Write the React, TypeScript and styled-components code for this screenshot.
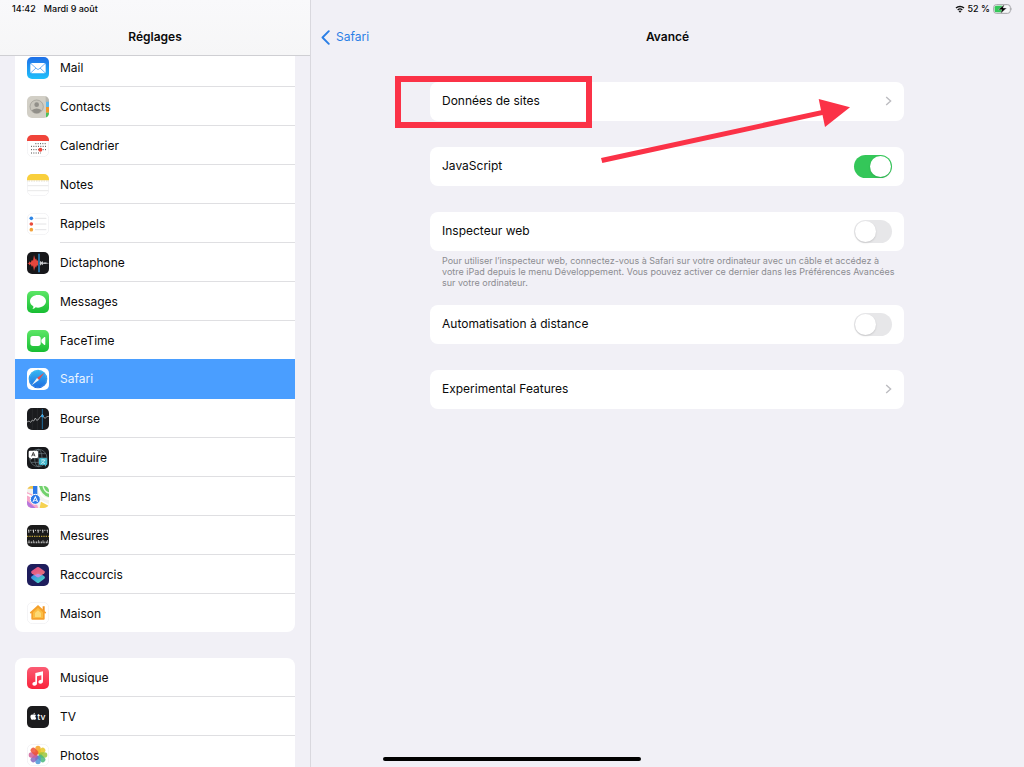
import React, { useState } from "react";
import styled, { createGlobalStyle, css } from "styled-components";
import { FaApple } from "react-icons/fa";

const colors = {
  page: "#f1f0f6",
  card: "#ffffff",
  line: "#dfdfe2",
  selected: "#4a9eff",
  link: "#2b7fe6",
  muted: "#8c8c91",
  mark: "#fb3247",
};

const GlobalStyle = createGlobalStyle`
  *, *::before, *::after { box-sizing: border-box; }
  body {
    margin: 0;
    background: ${colors.page};
    color: #0a0a0a;
    font-family: Inter, "Liberation Sans", sans-serif;
    font-size: 12px;
    line-height: 16px;
  }
  h1, h2, p, ul { margin: 0; padding: 0; }
`;

const Screen = styled.div`
  position: relative;
  display: flex;
  height: 100vh;
  overflow: hidden;
`;

const Sidebar = styled.nav`
  position: relative;
  flex: 0 0 311px;
  border-right: 1px solid #d9d8de;
  overflow: hidden;
`;

const SidebarHeader = styled.header`
  position: absolute;
  inset: 0 0 auto 0;
  z-index: 1;
  height: 56px;
  border-bottom: 1px solid #cfcfd3;
  background: linear-gradient(#f9f9fb, #f6f6f7);
`;

const StatusLine = styled.div<{ $end?: boolean }>`
  display: flex;
  align-items: center;
  justify-content: ${(p) => (p.$end ? "flex-end" : "flex-start")};
  gap: ${(p) => (p.$end ? "3px" : "8px")};
  height: 18px;
  padding: 0 ${(p) => (p.$end ? "11px" : "12px")};
  font-size: 9px;
  font-weight: 500;
  line-height: 12px;
`;

const TitleBar = styled.div`
  display: grid;
  grid-template-columns: 1fr auto 1fr;
  align-items: center;
  height: 38px;
  padding: 0 10px;
`;

const Title = styled.h1`
  grid-column: 2;
  font-size: 12px;
  font-weight: 600;
  line-height: 16px;
`;

const BackLink = styled.a`
  display: flex;
  align-items: center;
  gap: 6px;
  color: ${colors.link};
  text-decoration: none;
`;

const SidebarScroll = styled.div`
  display: flex;
  flex-direction: column;
  gap: 26px;
  padding: 48px 15px 0;
`;

const AppGroup = styled.ul`
  list-style: none;
  border-radius: 8px;
  background: ${colors.card};
  overflow: hidden;
`;

const AppLabel = styled.span`
  flex: 1;
  display: flex;
  align-items: center;
  align-self: stretch;
  padding-top: 1px;
  border-bottom: 1px solid ${colors.line};
`;

const AppLink = styled.a<{ $selected?: boolean }>`
  display: flex;
  align-items: center;
  gap: 11px;
  height: 39px;
  padding-left: 12px;
  color: inherit;
  text-decoration: none;

  li:last-child > & {
    height: 38px;
  }
  li:last-child > & ${AppLabel} {
    border-bottom: 0;
  }
  ${(p) =>
    p.$selected &&
    css`
      position: relative;
      height: 40px;
      margin-top: -1px;
      background: ${colors.selected};
      color: #e9f4ff;
      ${AppLabel} {
        border-bottom-color: transparent;
      }
    `}
`;

const AppIcon = styled.svg`
  flex: none;
  width: 22px;
  height: 22px;
  border-radius: 5px;
`;

const Main = styled.main`
  flex: 1;
  min-width: 0;
`;

const Settings = styled.div`
  display: flex;
  flex-direction: column;
  gap: 26px;
  padding: 26px 120px 0 119px;
`;

const Section = styled.section`
  position: relative;
`;

const cardRow = css`
  display: flex;
  align-items: center;
  justify-content: space-between;
  height: 39px;
  padding: 0 12px 1px;
  border-radius: 8px;
  background: ${colors.card};
`;

const LinkRow = styled.a`
  ${cardRow}
  color: inherit;
  text-decoration: none;
`;

const SwitchRow = styled.label`
  ${cardRow}
`;

const Switch = styled.input`
  appearance: none;
  display: flex;
  align-items: center;
  width: 38px;
  height: 23px;
  margin: 0;
  padding: 1px;
  border-radius: 12px;
  background: #e7e7e9;

  &::before {
    content: "";
    width: 21px;
    height: 21px;
    border-radius: 50%;
    background: #ffffff;
    box-shadow: 0 1px 2px rgba(0, 0, 0, 0.14);
  }
  &:checked {
    justify-content: flex-end;
    background: #34c759;
  }
`;

const Note = styled.p`
  padding: 4px 8px 0 12px;
  margin-bottom: -9px;
  color: ${colors.muted};
  font-size: 9px;
  line-height: 11px;
`;

const MarkBox = styled.div`
  position: absolute;
  top: -6px;
  left: -35px;
  width: 197px;
  height: 52px;
  border: 6px solid ${colors.mark};
  pointer-events: none;
`;

const MarkArrow = styled.svg`
  position: absolute;
  top: 16px;
  right: 54px;
  width: 250px;
  height: 66px;
  z-index: 1;
  pointer-events: none;
`;

const HomeIndicator = styled.div`
  position: absolute;
  bottom: 6px;
  left: 50%;
  width: 258px;
  height: 4px;
  border-radius: 2px;
  background: #000000;
  transform: translateX(-50%);
`;

const Chevron = () => (
  <svg width="7" height="10" viewBox="0 0 7 10" aria-hidden="true">
    <path d="M1.2 1 5.6 5 1.2 9" fill="none" stroke="#bcbcc0" strokeWidth="1.4" />
  </svg>
);

const BackChevron = () => (
  <svg width="9" height="15" viewBox="0 0 9 15" aria-hidden="true">
    <path d="M7.8 1.2 1.5 7.5l6.3 6.3" fill="none" stroke={colors.link} strokeWidth="1.9" strokeLinecap="round" strokeLinejoin="round" />
  </svg>
);

const Wifi = () => (
  <svg width="10" height="8" viewBox="0 0 20 16" aria-hidden="true">
    <path d="M2 6.2a11.5 11.5 0 0 1 16 0" fill="none" stroke="#111" strokeWidth="2.8" />
    <path d="M5.4 10a6.6 6.6 0 0 1 9.2 0" fill="none" stroke="#111" strokeWidth="2.6" />
    <path d="M10 15.4 7.2 12.4a4 4 0 0 1 5.6 0Z" fill="#111" />
  </svg>
);

const Battery = () => (
  <svg width="20" height="10" viewBox="0 0 60 30" aria-hidden="true">
    <rect x="2" y="2" width="50" height="26" rx="8" fill="#f6f6f8" stroke="#a3a3a8" strokeWidth="3" />
    <path d="M10 5h18v20H10a5 5 0 0 1-5-5V10a5 5 0 0 1 5-5Z" fill="#34c759" />
    <path d="M55 10q4 5 0 10Z" fill="#a3a3a8" />
    <path d="M35 1 16 17h11l-5 12 19-17H30Z" fill="#000" stroke="#f6f6f8" strokeWidth="1" />
  </svg>
);

const Frame = () => <rect x="1" y="1" width="64" height="64" rx="15" fill="#fff" stroke="#ececee" strokeWidth="2" />;

const icons: Record<string, React.ReactNode> = {
  mail: (
    <>
      <defs>
        <linearGradient id="mail" x2="0" y2="1">
          <stop stopColor="#1f6fe8" />
          <stop offset="1" stopColor="#1fc0fb" />
        </linearGradient>
      </defs>
      <rect width="66" height="66" fill="url(#mail)" />
      <rect x="10" y="18" width="46" height="31" rx="5" fill="#fff" />
      <path d="m12 20 18 16q3 3 6 0l18-16M12 47l15-14M54 47 39 33" fill="none" stroke="#2c8cf0" strokeWidth="2" />
    </>
  ),
  contacts: (
    <>
      <rect width="66" height="66" fill="#d2cfc6" />
      <path d="M56 0h10v18H56Z" fill="#b9b7b0" />
      <path d="M57 17h9v16h-9Z" fill="#5cb8ee" />
      <path d="M57 33h9v17h-9Z" fill="#f0962c" />
      <path d="M57 50h9v16h-9Z" fill="#4cc05c" />
      <circle cx="29" cy="32" r="20" fill="#c9c6bd" stroke="#9c9a93" strokeWidth="2" />
      <circle cx="29" cy="26" r="7" fill="#918f89" />
      <path d="M14 43q15-11 30 0-6 9-15 9t-15-9Z" fill="#918f89" />
    </>
  ),
  calendar: (
    <>
      <Frame />
      <path d="M0 0h66v18H0Z" fill="#f0443a" />
      <path d="M25 26h33M12 34h46M12 44h46M12 54h30" stroke="#4a4a4a" strokeWidth="3" strokeDasharray="3 4" />
      <circle cx="40" cy="44" r="6" fill="#f0443a" />
    </>
  ),
  notes: (
    <>
      <Frame />
      <path d="M0 0h66v19H0Z" fill="#f9cf3c" />
      <path d="M2 21h62" stroke="#bdb59a" strokeWidth="2" strokeDasharray="2 3" />
      <path d="M2 35h62M2 50h62" stroke="#dcdcdc" strokeWidth="2" />
    </>
  ),
  reminders: (
    <>
      <Frame />
      <path d="M24 16h34M24 33h34M24 50h34" stroke="#d6d6d9" strokeWidth="2" />
      <circle cx="13" cy="16" r="5.5" fill="#2f86e6" />
      <circle cx="13" cy="33" r="5.5" fill="#ea4b3c" />
      <circle cx="13" cy="50" r="5.5" fill="#f3a33a" />
    </>
  ),
  voice: (
    <>
      <rect width="66" height="66" fill="#17171a" />
      <path d="M0 34l5-1 3-5 3 4 4-9 3 4 3-18 4 14 2-4 3 8 3-3v18l-3-3-3 9-2-5-4 14-3-17-3 5-4-9-3 4-3-5Z" fill="#e5473e" />
      <path d="M36 5v56" stroke="#2f94d8" strokeWidth="4" />
      <path d="M38 34l2-8 3 5 3-4 3 5 5-1 12 3-12 2-5-1-3 5-3-4-3 5Z" fill="#c9c9cc" />
    </>
  ),
  messages: (
    <>
      <defs>
        <linearGradient id="green" x2="0" y2="1">
          <stop stopColor="#5ce766" />
          <stop offset="1" stopColor="#17bd33" />
        </linearGradient>
      </defs>
      <rect width="66" height="66" fill="url(#green)" />
      <path d="M33 12c13 0 24 8 24 19S46 50 33 50q-4 0-7-1-4 5-10 5 4-3 3-8C13 43 9 38 9 31c0-11 11-19 24-19Z" fill="#fff" />
    </>
  ),
  facetime: (
    <>
      <rect width="66" height="66" fill="url(#green)" />
      <rect x="10" y="18" width="31" height="30" rx="8" fill="#fff" />
      <path d="m43 29 9-8q3-1 3 2v20q0 3-3 2l-9-8Z" fill="#fff" />
    </>
  ),
  safari: (
    <>
      <defs>
        <linearGradient id="safari" x2="0" y2="1">
          <stop stopColor="#35b9f2" />
          <stop offset="1" stopColor="#1f6be0" />
        </linearGradient>
      </defs>
      <rect width="66" height="66" fill="#fff" />
      <circle cx="33" cy="33" r="28" fill="url(#safari)" />
      <circle cx="33" cy="33" r="25" fill="none" stroke="#7cc6f5" strokeWidth="3" strokeDasharray="1 3" />
      <path d="M52 14 30 30 36 36Z" fill="#f04a42" />
      <path d="M14 52 30 30 36 36Z" fill="#f2f4f6" />
    </>
  ),
  stocks: (
    <>
      <rect width="66" height="66" fill="#1a1b1e" />
      <path d="M16 0v66M31 0v66" stroke="#2c2d31" strokeWidth="2" />
      <path d="M46 3v60" stroke="#1f6c9c" strokeWidth="3" />
      <path d="m0 42 6-3 5 4 5-7 4 3 5-9 4 7 5-2 4-7 4-3 4-6 4 9 5 3 4-5 7-1" fill="none" stroke="#d4d6d8" strokeWidth="2" />
      <circle cx="46" cy="24" r="4" fill="#35a5e6" />
    </>
  ),
  translate: (
    <>
      <rect width="66" height="66" fill="#17181b" />
      <g fill="none" stroke="#718087" strokeWidth="2">
        <circle cx="34" cy="33" r="26" />
        <ellipse cx="34" cy="33" rx="11" ry="26" />
        <path d="M8 33h52M12 20h44M12 46h44M34 7v52" />
      </g>
      <path d="M9 11h20q4 0 4 4v14q0 4-4 4H17l-6 5v-5q-6 0-6-4V15q0-4 4-4Z" fill="#fff" />
      <path d="m14 28 5-12 5 12M16 24h6" fill="none" stroke="#222" strokeWidth="2.5" />
      <path d="M40 33h17q4 0 4 4v13q0 4-4 4v5l-5-5H40q-4 0-4-4V37q0-4 4-4Z" fill="#43b4c9" />
      <path d="M42 39h13M48 36v3M53 39q-3 9-11 11M44 43q4 6 10 7" fill="none" stroke="#e7fbff" strokeWidth="2" />
    </>
  ),
  maps: (
    <>
      <rect width="66" height="66" fill="#f3f3ef" />
      <path d="M0 0h18v8H0Z" fill="#f1c44b" />
      <path d="M36 0h30v34Q44 28 36 0Z" fill="#70d16c" />
      <path d="M33 0q5 36 33 40" fill="none" stroke="#fff" strokeWidth="5" />
      <path d="M48 0q4 18 18 21" fill="none" stroke="#eafbe5" strokeWidth="4" />
      <path d="M0 18 20 28 34 66H0Z" fill="#f7a8c9" />
      <path d="M0 25 66 58" stroke="#fff" strokeWidth="6" />
      <path d="M0 44 26 66H0Z" fill="#b877dc" />
      <path d="M42 47 66 60v6H38Z" fill="#f6d250" />
      <path d="M18 0h13v34H18Z" fill="#2c78e8" />
      <circle cx="25" cy="40" r="15" fill="#2c78e8" stroke="#fff" strokeWidth="3" />
      <path d="m25 29 9 20-9-5-9 5Z" fill="#fff" />
      <path d="m25 36 4 8-4-2-4 2Z" fill="#2c78e8" />
    </>
  ),
  measure: (
    <>
      <rect width="66" height="66" fill="#1b1b1b" />
      <path d="M3 16h60" stroke="#b8b8b8" strokeWidth="4" strokeDasharray="3 4" />
      <path d="M4 19h58" stroke="#d0d0d0" strokeWidth="9" strokeDasharray="3 11" />
      <path d="M0 34h66" stroke="#b89d35" strokeWidth="4" strokeDasharray="4 3" />
      <path d="M2 52h62" stroke="#b0b0b0" strokeWidth="5" strokeDasharray="3 2" />
      <path d="M5 49h58" stroke="#b8b8b8" strokeWidth="8" strokeDasharray="2 12" />
    </>
  ),
  shortcuts: (
    <>
      <defs>
        <linearGradient id="scTop" x2="1" y2="1">
          <stop stopColor="#f4508c" />
          <stop offset="1" stopColor="#f0817a" />
        </linearGradient>
        <linearGradient id="scBottom" x2="1" y2="1">
          <stop stopColor="#2e7cf0" />
          <stop offset="1" stopColor="#52e0b8" />
        </linearGradient>
      </defs>
      <rect width="66" height="66" fill="#1e1d5c" />
      <path d="M14 37 33 25 52 37q4 4 0 7L36 56q-3 2-6 0L14 44q-4-3 0-7Z" fill="url(#scBottom)" />
      <path d="M30 10q3-2 6 0l16 11q4 3 0 7L36 39q-3 2-6 0L14 28q-4-4 0-7Z" fill="url(#scTop)" opacity="0.93" />
      <path d="m33 29 11 5-8 5q-3 2-6 0l-8-5Z" fill="#b58fe8" />
    </>
  ),
  home: (
    <>
      <Frame />
      <path d="M47 13h6v14h-6Z" fill="#ee9323" />
      <path d="M33 9 9 31q-2 4 4 3v16q0 3 3 3h34q3 0 3-3V34q6 1 4-3Z" fill="#f5a02c" />
      <path d="M33 17 18 31v17h30V31Z" fill="#fbbd42" />
      <path d="M33 25 24 33v12h18V33Z" fill="#fdda75" />
    </>
  ),
  music: (
    <>
      <defs>
        <linearGradient id="music" x2="0" y2="1">
          <stop stopColor="#fb5c74" />
          <stop offset="1" stopColor="#f9233b" />
        </linearGradient>
      </defs>
      <rect width="66" height="66" fill="url(#music)" />
      <path d="M25 18 48 13v29q0 8-8 8-6 0-6-5 0-4 5-6l4-1V25l-13 3v20q0 8-8 8-6 0-6-5 0-5 5-6l4-1Z" fill="#fff" />
    </>
  ),
  tv: (
    <>
      <rect width="66" height="66" fill="#1b1b1d" />
      <FaApple x={7} y={19} size={24} color="#fff" />
      <text x="31" y="42" fill="#fff" fontFamily="Inter, sans-serif" fontSize="26" fontWeight="500">tv</text>
    </>
  ),
  photos: (
    <>
      <Frame />
      {["#f6a021", "#e8c524", "#9bc63c", "#49b77c", "#4a96d8", "#8867c0", "#cf5f98", "#ec5138"].map((fill, i) => (
        <rect key={fill} x="25" y="5" width="16" height="26" rx="8" fill={fill} opacity="0.85" transform={`rotate(${i * 45} 33 33)`} />
      ))}
    </>
  ),
};

type Entry = { icon: string; name: string };

const groups: Entry[][] = [
  [
    { icon: "mail", name: "Mail" },
    { icon: "contacts", name: "Contacts" },
    { icon: "calendar", name: "Calendrier" },
    { icon: "notes", name: "Notes" },
    { icon: "reminders", name: "Rappels" },
    { icon: "voice", name: "Dictaphone" },
    { icon: "messages", name: "Messages" },
    { icon: "facetime", name: "FaceTime" },
    { icon: "safari", name: "Safari" },
    { icon: "stocks", name: "Bourse" },
    { icon: "translate", name: "Traduire" },
    { icon: "maps", name: "Plans" },
    { icon: "measure", name: "Mesures" },
    { icon: "shortcuts", name: "Raccourcis" },
    { icon: "home", name: "Maison" },
  ],
  [
    { icon: "music", name: "Musique" },
    { icon: "tv", name: "TV" },
    { icon: "photos", name: "Photos" },
  ],
];

function SwitchSetting({ label, initial = false }: { label: string; initial?: boolean }) {
  const [on, setOn] = useState(initial);
  return (
    <SwitchRow>
      {label}
      <Switch type="checkbox" role="switch" checked={on} onChange={(e) => setOn(e.target.checked)} />
    </SwitchRow>
  );
}

export default function App() {
  return (
    <>
      <GlobalStyle />
      <Screen>
        <Sidebar>
          <SidebarHeader>
            <StatusLine>
              <span>14:42</span>
              <span>Mardi 9 août</span>
            </StatusLine>
            <TitleBar>
              <Title as="h2">Réglages</Title>
            </TitleBar>
          </SidebarHeader>
          <SidebarScroll>
            {groups.map((group) => (
              <AppGroup key={group[0].name}>
                {group.map(({ icon, name }) => (
                  <li key={name}>
                    <AppLink href={`#${icon}`} $selected={icon === "safari"}>
                      <AppIcon viewBox="0 0 66 66" aria-hidden="true">
                        {icons[icon]}
                      </AppIcon>
                      <AppLabel>{name}</AppLabel>
                    </AppLink>
                  </li>
                ))}
              </AppGroup>
            ))}
          </SidebarScroll>
        </Sidebar>

        <Main>
          <StatusLine $end>
            <Wifi />
            <span>52 %</span>
            <Battery />
          </StatusLine>
          <TitleBar>
            <BackLink href="#safari">
              <BackChevron />
              Safari
            </BackLink>
            <Title>Avancé</Title>
          </TitleBar>
          <Settings>
            <Section>
              <LinkRow href="#donnees">
                Données de sites
                <Chevron />
              </LinkRow>
              <MarkBox />
              <MarkArrow viewBox="0 0 250 66" aria-hidden="true">
                <path d="M1 60 221 12.3 218.7 1 250 9.3 225 29 222.5 17 2.3 65Z" fill={colors.mark} />
              </MarkArrow>
            </Section>
            <Section>
              <SwitchSetting label="JavaScript" initial />
            </Section>
            <Section>
              <SwitchSetting label="Inspecteur web" />
              <Note>
                Pour utiliser l’inspecteur web, connectez-vous à Safari sur votre ordinateur avec un câble et accédez à
                votre iPad depuis le menu Développement. Vous pouvez activer ce dernier dans les Préférences Avancées
                sur votre ordinateur.
              </Note>
            </Section>
            <Section>
              <SwitchSetting label="Automatisation à distance" />
            </Section>
            <Section>
              <LinkRow href="#experimental">
                Experimental Features
                <Chevron />
              </LinkRow>
            </Section>
          </Settings>
        </Main>
        <HomeIndicator />
      </Screen>
    </>
  );
}
